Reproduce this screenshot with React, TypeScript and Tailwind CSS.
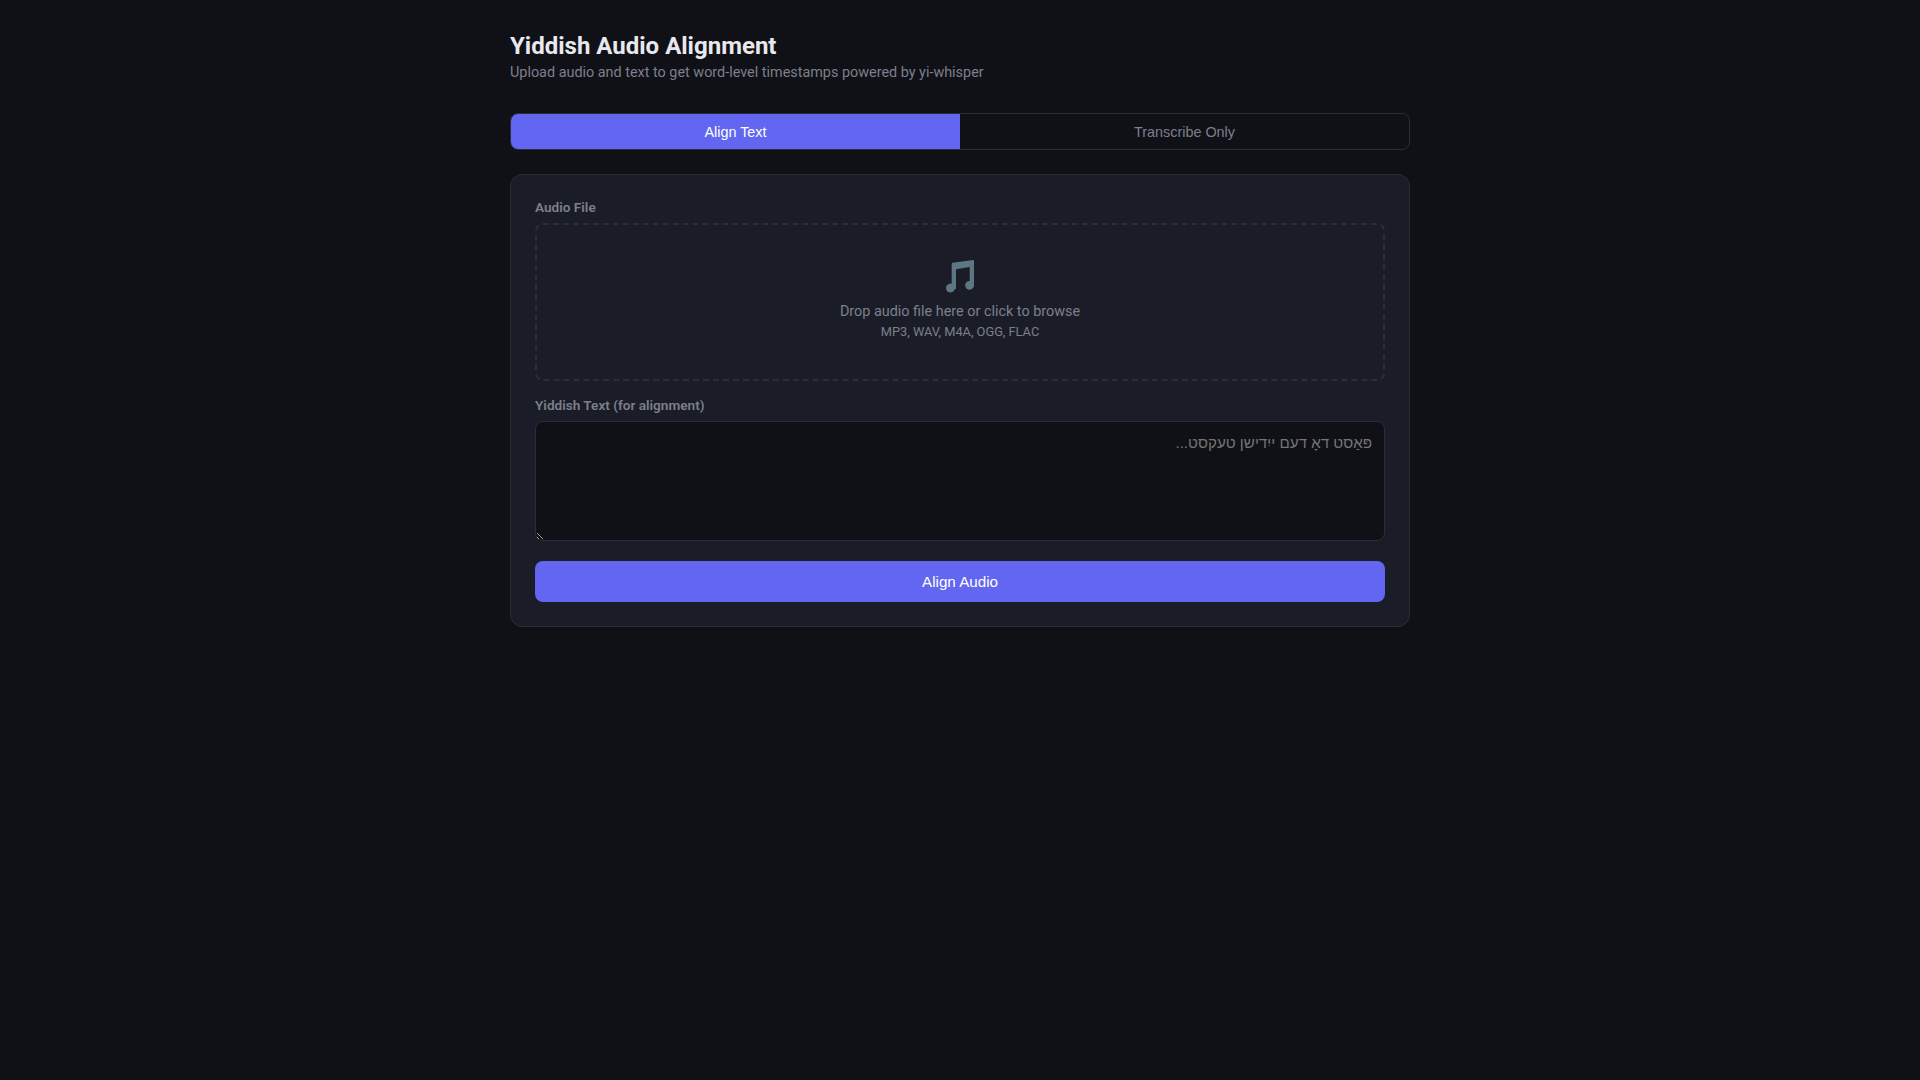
import React from "react";

function NoteIcon() {
  return (
    <svg width="30" height="33" viewBox="-1 0 30 33" className="block" fill="#5d7683">
      <path d="M5.700 4c0-.7.4-1.200 1-1.300L27 0c.6-.1 1 .3 1 .9V26h-4.300V7L10 9.200V29H5.700z" />
      <ellipse cx="4.500" cy="28" rx="4.500" ry="4.400" transform="rotate(-25 4.500 28)" />
      <ellipse cx="23.600" cy="25.300" rx="4.400" ry="4.400" transform="rotate(-25 23.600 25.300)" />
    </svg>
  );
}

export default function App() {
  return (
    <div className="min-h-screen bg-[#0f1117] font-['Roboto',sans-serif] text-[#e4e4e7]">
      <div className="mx-auto w-[900px] pt-8">
        <h1 className="text-[24px] leading-[28px] font-bold text-[#e8e8ed]">Yiddish Audio Alignment</h1>
        <p className="mt-[2px] text-[14.4px] leading-[21px] text-[#7d7f8c]">
          Upload audio and text to get word-level timestamps powered by yi-whisper
        </p>

        <div className="mt-[30px] flex h-[37px] overflow-hidden rounded-lg border border-[#2a2d3a] font-['Liberation_Sans',sans-serif] text-[14.4px]">
          <button className="flex-1 bg-[#6366f1] pt-[2px] text-white">Align Text</button>
          <button className="flex-1 pt-[2px] text-[#7d7f8c]">Transcribe Only</button>
        </div>

        <div className="mt-6 rounded-xl border border-[#2a2d3a] bg-[#1a1d27] p-6">
          <label className="block pt-[1px] text-[13.6px] leading-[15px] font-semibold text-[#7d7f8c]">Audio File</label>
          <div className="mt-[8px] flex h-[158px] flex-col items-center rounded-lg border-2 border-dashed border-[#2a2d3a] pt-[35px]">
            <NoteIcon />
            <p className="mt-[8px] text-[14.4px] leading-[21px] text-[#7d7f8c]">Drop audio file here or click to browse</p>
            <p className="text-[12.8px] leading-[19px] text-[#7d7f8c]">MP3, WAV, M4A, OGG, FLAC</p>
          </div>

          <label className="mt-[17px] block text-[13.6px] leading-[15px] font-semibold text-[#7d7f8c]">Yiddish Text (for alignment)</label>
          <textarea
            dir="rtl"
            placeholder="פּאַסט דאָ דעם ייִדישן טעקסט..."
            className="mt-[8px] block h-[120px] w-full resize-y rounded-lg border border-[#2a2d3a] bg-[#0f1117] px-3 py-[10px] font-['Liberation_Sans',sans-serif] text-[15.2px] text-[#e4e4e7] outline-none placeholder:text-[#757575]"
          />

          <button className="mt-5 flex h-[41px] w-full items-center justify-center rounded-lg bg-[#6366f1] pt-[1px] font-['Liberation_Sans',sans-serif] text-[15.2px] font-normal text-white">
            Align Audio
          </button>
        </div>
      </div>
    </div>
  );
}
